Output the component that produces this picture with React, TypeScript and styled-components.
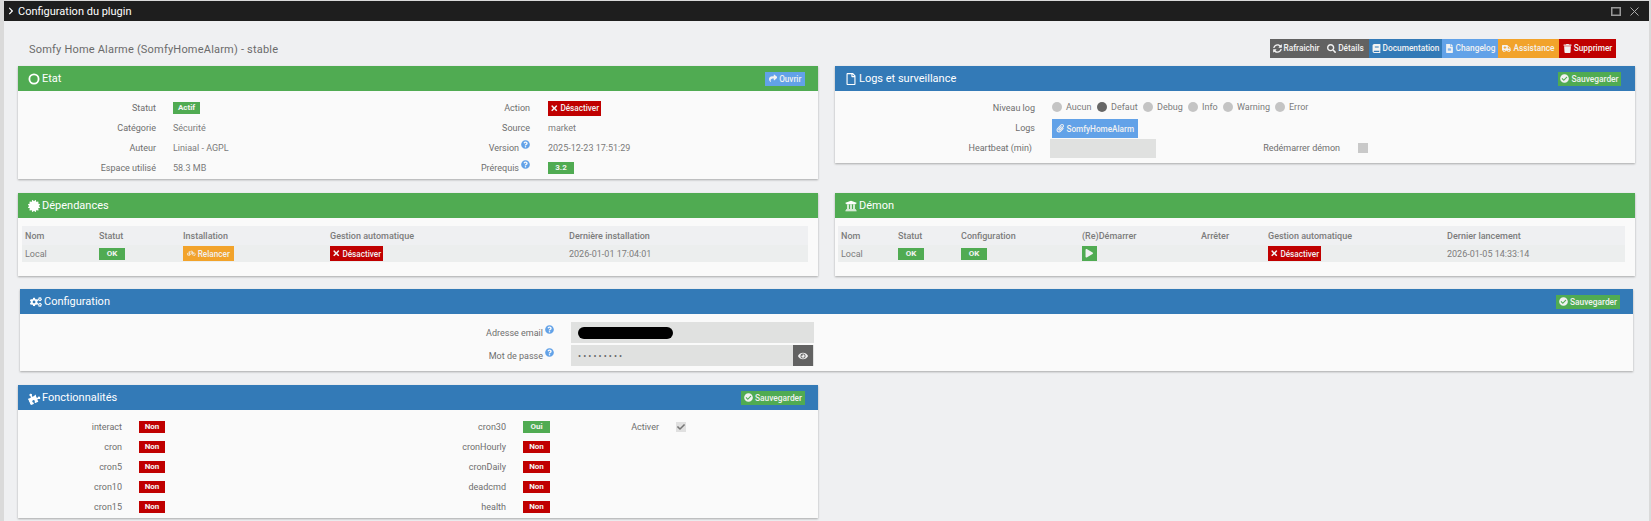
import React from "react";
import styled, { createGlobalStyle } from "styled-components";
import {
  FaAmbulance, FaBicycle, FaBook, FaCertificate, FaCheck, FaCheckCircle, FaChevronRight, FaCogs,
  FaEye, FaFileAlt, FaPaperclip, FaPlay, FaPuzzlePiece, FaQuestionCircle, FaRegFile,
  FaSearch, FaShare, FaSyncAlt, FaTimes, FaTrash, FaUniversity,
} from "react-icons/fa";

const GREEN = "#50ab52";
const BLUE = "#337ab7";
const SKY = "#62a2e8";
const ORANGE = "#f2a32b";
const RED = "#c00000";
const GREY = "#626262";

const Global = createGlobalStyle`
  html, body { margin: 0; padding: 0; background: #dadada; }
  body { font-family: Roboto, "Liberation Sans", sans-serif; overflow: hidden; }
`;

const Page = styled.div`
  padding: 1px 2px 0 4px;
  height: 520px;
`;
const Modal = styled.div`
  height: 520px;
  background: #eff0f2;
  display: flex;
  flex-direction: column;
  overflow: hidden;
`;
const TitleBar = styled.header`
  flex: none;
  height: 20px;
  background: #1e1e1e;
  color: #fff;
  display: flex;
  align-items: center;
  padding: 0 10px 0 3px;
  font-size: 11px;
  gap: 3px;
`;
const TitleText = styled.span`
  flex: 1;
`;
const WinButtons = styled.span`
  display: flex;
  align-items: center;
  gap: 9px;
`;
const Content = styled.div`
  padding: 0 14px;
`;
const PluginHead = styled.div`
  height: 45px;
  display: flex;
  align-items: center;
  justify-content: space-between;
  padding: 11px 19px 0 11px;
  box-sizing: border-box;
`;
const PluginName = styled.h1`
  margin: 0;
  font-size: 11px;
  font-weight: 400;
  letter-spacing: 0.2px;
  color: #6b6b6b;
`;
const ActionBar = styled.div`
  display: flex;
  height: 19px;
  margin-top: -2px;
`;
const ActionButton = styled.span<{ $bg: string; $w: number }>`
  width: ${(p) => p.$w}px;
  background: ${(p) => p.$bg};
  color: #f2f2f2;
  font-size: 8.3px;
  font-weight: 500;
  display: flex;
  align-items: center;
  justify-content: center;
  gap: 2px;
  white-space: nowrap;
  svg { font-size: 9px; flex: none; }
`;
const Columns = styled.div<{ $mb: number }>`
  display: grid;
  grid-template-columns: 800px 800px;
  column-gap: 17px;
  align-items: start;
  margin-bottom: ${(p) => p.$mb}px;
`;
const Panel = styled.section<{ $w?: number; $ml?: number; $mb?: number }>`
  width: ${(p) => (p.$w ? p.$w + "px" : "auto")};
  margin-left: ${(p) => p.$ml ?? 0}px;
  margin-bottom: ${(p) => p.$mb ?? 0}px;
  background: #fafafa;
  box-shadow: 0 1px 2px rgba(0, 0, 0, 0.3);
`;
const PanelHead = styled.div<{ $bg: string; $pr?: number }>`
  height: 25px;
  background: ${(p) => p.$bg};
  color: #fff;
  display: flex;
  align-items: center;
  justify-content: space-between;
  padding: 0 ${(p) => p.$pr ?? 13}px 0 10px;
  font-size: 11px;
  font-weight: 400;
`;
const HeadTitle = styled.span`
  display: flex;
  align-items: center;
  gap: 2px;
  svg { font-size: 12px; flex: none; }
`;
const PuzzleIcon = styled(FaPuzzlePiece)`
  transform: rotate(-25deg);
`;
const SmallButton = styled.span<{ $bg: string; $w?: number; $h?: number }>`
  display: inline-flex;
  align-items: center;
  justify-content: center;
  gap: 2px;
  box-sizing: border-box;
  width: ${(p) => (p.$w ? p.$w + "px" : "auto")};
  height: ${(p) => p.$h ?? 15}px;
  background: ${(p) => p.$bg};
  color: #f1f1f1;
  font-size: 8.2px;
  font-weight: 500;
  white-space: nowrap;
  svg { font-size: 8.5px; flex: none; }
`;
const SaveButton = styled(SmallButton)`
  font-size: 8.4px;
  font-weight: 500;
  svg { font-size: 9px; }
`;
const Badge = styled.span<{ $bg: string; $w: number }>`
  display: inline-flex;
  align-items: center;
  justify-content: center;
  width: ${(p) => p.$w}px;
  height: 12px;
  background: ${(p) => p.$bg};
  color: #f4f4f4;
  font-size: 8px;
  font-weight: 700;
`;
const InfoGrid = styled.div<{ $cols: string; $pt: number; $pb: number }>`
  display: grid;
  grid-template-columns: ${(p) => p.$cols};
  grid-auto-rows: 20px;
  align-items: center;
  padding: ${(p) => p.$pt}px 0 ${(p) => p.$pb}px;
`;
const Label = styled.span<{ $pr?: number }>`
  font-size: 9px;
  line-height: 12px;
  color: #6e6e6e;
  text-align: right;
  padding-right: ${(p) => p.$pr ?? 17}px;
  white-space: nowrap;
`;
const Help = styled(FaQuestionCircle)`
  color: ${SKY};
  font-size: 9px;
  vertical-align: middle;
  margin-left: 2px;
  position: relative;
  top: -4px;
`;
const Value = styled.span`
  font-size: 9px;
  color: #7a7a7a;
  white-space: nowrap;
  line-height: 12px;
  display: flex;
  align-items: center;
`;
const ValueWide = styled(Value)`
  grid-column: span 3;
`;
const LogBody = styled.div`
  padding: 6px 0 5px;
`;
const LogRow = styled.div<{ $h: number }>`
  display: flex;
  align-items: center;
  height: ${(p) => p.$h}px;
`;
const LogLabel = styled(Label)`
  width: 200px;
  box-sizing: border-box;
`;
const RadioGroup = styled.div`
  display: flex;
  align-items: center;
  margin: -2px 0 0 17px;
`;
const Radio = styled.span<{ $on?: boolean; $w: number }>`
  display: flex;
  align-items: center;
  width: ${(p) => p.$w}px;
  font-size: 9px;
  color: #7a7a7a;
  gap: 4px;
  &::before {
    content: "";
    width: 10px;
    height: 10px;
    border-radius: 50%;
    background: ${(p) => (p.$on ? "#666" : "#c4c4c4")};
    flex: none;
  }
`;
const LogButtonWrap = styled.div`
  margin-left: 17px;
`;
const GreyInput = styled.div<{ $w: number; $h: number }>`
  width: ${(p) => p.$w}px;
  height: ${(p) => p.$h}px;
  background: #e0e1e0;
  position: relative;
  display: flex;
  align-items: center;
  flex: none;
`;
const HeartInput = styled(GreyInput)`
  margin-left: 15px;
`;
const RestartLabel = styled(Label)`
  width: 184px;
  box-sizing: border-box;
  padding-right: 0;
`;
const CheckBox = styled.span`
  width: 10px;
  height: 10px;
  background: #c9c9c9;
  margin-left: 18px;
  flex: none;
`;
const TableWrap = styled.div<{ $pl: number; $w: number }>`
  padding: 8px 0 14px ${(p) => p.$pl}px;
  width: ${(p) => p.$w}px;
`;
const TableRow = styled.div<{ $cols: string; $bg: string; $h: number }>`
  display: grid;
  grid-template-columns: ${(p) => p.$cols};
  height: ${(p) => p.$h}px;
  background: ${(p) => p.$bg};
  align-items: center;
`;
const Th = styled.span`
  font-size: 9px;
  font-weight: 500;
  color: #7c7c7c;
  padding-left: 3px;
  white-space: nowrap;
`;
const Td = styled.span`
  font-size: 9px;
  color: #7c7c7c;
  padding-left: 3px;
  white-space: nowrap;
  display: flex;
  align-items: center;
`;
const ConfigBody = styled.div`
  padding: 8px 0 5px;
  display: grid;
  grid-template-columns: 551px 243px;
  grid-auto-rows: 21px;
  row-gap: 2px;
  align-items: center;
`;
const Redacted = styled.span`
  width: 95px;
  height: 12px;
  background: #000;
  border-radius: 6px;
  margin-left: 7px;
`;
const Dots = styled.span`
  font-size: 9px;
  color: #666;
  margin-left: 7px;
  letter-spacing: 2.1px;
`;
const EyeAddon = styled.span`
  position: absolute;
  right: 1px;
  top: 0;
  bottom: 0;
  width: 20px;
  background: ${GREY};
  color: #eee;
  display: flex;
  align-items: center;
  justify-content: center;
  font-size: 10px;
`;
const Tick = styled(FaCheck)`
  font-size: 8px;
  color: #777;
`;
const TickBox = styled.span`
  width: 10px;
  height: 10px;
  background: #e0e0e0;
  display: flex;
  align-items: center;
  justify-content: center;
`;

const Save = ({ w }: { w: number }) => (
  <SaveButton $bg={GREEN} $w={w} $h={14}><FaCheckCircle />Sauvegarder</SaveButton>
);
const Off = () => (
  <SmallButton $bg={RED} $w={53}><FaTimes />Désactiver</SmallButton>
);
const Ok = () => <Badge $bg={GREEN} $w={26}>OK</Badge>;

const ETAT_COLS = "155px 200px 175px 1fr";
const DEP_COLS = "74px 84px 147px 239px 1fr";
const DEM_COLS = "57px 63px 121px 119px 67px 179px 1fr";
const FEAT_COLS = "121px 200px 184px 70px 83px 1fr";
const FEATS: [string, string][] = [
  ["cron", "cronHourly"],
  ["cron5", "cronDaily"],
  ["cron10", "deadcmd"],
  ["cron15", "health"],
];

export default function App() {
  return (
    <Page>
      <Global />
      <Modal>
        <TitleBar>
          <FaChevronRight size={8} />
          <TitleText>Configuration du plugin</TitleText>
          <WinButtons>
            <svg width="10" height="9" viewBox="0 0 10 9"><rect x="0.75" y="0.75" width="8.5" height="7.5" fill="none" stroke="#999" strokeWidth="1.5" /></svg>
            <svg width="9" height="9" viewBox="0 0 9 9"><path d="M0.5 0.5L8.5 8.5M8.5 0.5L0.5 8.5" stroke="#aaa" fill="none" /></svg>
          </WinButtons>
        </TitleBar>
        <Content>
          <PluginHead>
            <PluginName>Somfy Home Alarme (SomfyHomeAlarm) - stable</PluginName>
            <ActionBar>
              <ActionButton $bg={GREY} $w={52}><FaSyncAlt />Rafraichir</ActionButton>
              <ActionButton $bg={GREY} $w={47}><FaSearch />Détails</ActionButton>
              <ActionButton $bg={BLUE} $w={73}><FaBook />Documentation</ActionButton>
              <ActionButton $bg={SKY} $w={56}><FaFileAlt />Changelog</ActionButton>
              <ActionButton $bg={ORANGE} $w={61}><FaAmbulance />Assistance</ActionButton>
              <ActionButton $bg={RED} $w={57}><FaTrash />Supprimer</ActionButton>
            </ActionBar>
          </PluginHead>

          <Columns $mb={14}>
            <Panel>
              <PanelHead $bg={GREEN}>
                <HeadTitle>
                  <svg width="12" height="12" viewBox="0 0 12 12"><circle cx="6" cy="6" r="4.6" fill="none" stroke="#fff" strokeWidth="1.8" /></svg>
                  Etat
                </HeadTitle>
                <SmallButton $bg={SKY} $w={40} $h={14}><FaShare />Ouvrir</SmallButton>
              </PanelHead>
              <InfoGrid $cols={ETAT_COLS} $pt={7} $pb={1}>
                <Label>Statut</Label>
                <Value><Badge $bg={GREEN} $w={27}>Actif</Badge></Value>
                <Label $pr={18}>Action</Label>
                <Value><Off /></Value>
                <Label>Catégorie</Label>
                <Value>Sécurité</Value>
                <Label $pr={18}>Source</Label>
                <Value>market</Value>
                <Label>Auteur</Label>
                <Value>Liniaal - AGPL</Value>
                <Label $pr={18}>Version<Help /></Label>
                <Value>2025-12-23 17:51:29</Value>
                <Label>Espace utilisé</Label>
                <Value>58.3 MB</Value>
                <Label $pr={18}>Prérequis<Help /></Label>
                <Value><Badge $bg={GREEN} $w={26}>3.2</Badge></Value>
              </InfoGrid>
            </Panel>
            <Panel>
              <PanelHead $bg={BLUE} $pr={14}>
                <HeadTitle><FaRegFile />Logs et surveillance</HeadTitle>
                <Save w={63} />
              </PanelHead>
              <LogBody>
                <LogRow $h={21}>
                  <LogLabel $pr={0}>Niveau log</LogLabel>
                  <RadioGroup>
                    <Radio $w={45}>Aucun</Radio>
                    <Radio $on $w={46}>Defaut</Radio>
                    <Radio $w={45}>Debug</Radio>
                    <Radio $w={35}>Info</Radio>
                    <Radio $w={52}>Warning</Radio>
                    <Radio $w={40}>Error</Radio>
                  </RadioGroup>
                </LogRow>
                <LogRow $h={20}>
                  <LogLabel $pr={0}>Logs</LogLabel>
                  <LogButtonWrap>
                    <SmallButton $bg={SKY} $w={86} $h={19}><FaPaperclip />SomfyHomeAlarm</SmallButton>
                  </LogButtonWrap>
                </LogRow>
                <LogRow $h={20}>
                  <LogLabel $pr={3}>Heartbeat (min)</LogLabel>
                  <HeartInput $w={106} $h={19} />
                  <RestartLabel>Redémarrer démon</RestartLabel>
                  <CheckBox />
                </LogRow>
              </LogBody>
            </Panel>
          </Columns>

          <Columns $mb={13}>
            <Panel>
              <PanelHead $bg={GREEN}>
                <HeadTitle><FaCertificate />Dépendances</HeadTitle>
              </PanelHead>
              <TableWrap $pl={4} $w={786}>
                <TableRow $cols={DEP_COLS} $bg="#eff0f2" $h={19}>
                  <Th>Nom</Th><Th>Statut</Th><Th>Installation</Th><Th>Gestion automatique</Th><Th>Dernière installation</Th>
                </TableRow>
                <TableRow $cols={DEP_COLS} $bg="#eceeee" $h={17}>
                  <Td>Local</Td>
                  <Td><Ok /></Td>
                  <Td><SmallButton $bg={ORANGE} $w={51}><FaBicycle />Relancer</SmallButton></Td>
                  <Td><Off /></Td>
                  <Td>2026-01-01 17:04:01</Td>
                </TableRow>
              </TableWrap>
            </Panel>
            <Panel>
              <PanelHead $bg={GREEN}>
                <HeadTitle><FaUniversity />Démon</HeadTitle>
              </PanelHead>
              <TableWrap $pl={3} $w={787}>
                <TableRow $cols={DEM_COLS} $bg="#eff0f2" $h={19}>
                  <Th>Nom</Th><Th>Statut</Th><Th>Configuration</Th><Th>(Re)Démarrer</Th><Th>Arrêter</Th><Th>Gestion automatique</Th><Th>Dernier lancement</Th>
                </TableRow>
                <TableRow $cols={DEM_COLS} $bg="#eceeee" $h={17}>
                  <Td>Local</Td>
                  <Td><Ok /></Td>
                  <Td><Ok /></Td>
                  <Td><SmallButton $bg={GREEN} $w={15}><FaPlay /></SmallButton></Td>
                  <Td />
                  <Td><Off /></Td>
                  <Td>2026-01-05 14:33:14</Td>
                </TableRow>
              </TableWrap>
            </Panel>
          </Columns>

          <Panel $w={1613} $ml={2} $mb={14}>
            <PanelHead $bg={BLUE}>
              <HeadTitle><FaCogs />Configuration</HeadTitle>
              <Save w={64} />
            </PanelHead>
            <ConfigBody>
              <Label>Adresse email<Help /></Label>
              <GreyInput $w={243} $h={21}><Redacted /></GreyInput>
              <Label>Mot de passe<Help /></Label>
              <GreyInput $w={243} $h={21}>
                <Dots>•••••••••</Dots>
                <EyeAddon><FaEye /></EyeAddon>
              </GreyInput>
            </ConfigBody>
          </Panel>

          <Panel $w={800}>
            <PanelHead $bg={BLUE}>
              <HeadTitle><PuzzleIcon />Fonctionnalités</HeadTitle>
              <Save w={64} />
            </PanelHead>
            <InfoGrid $cols={FEAT_COLS} $pt={7} $pb={1}>
              <Label>interact</Label>
              <Value><Badge $bg={RED} $w={26}>Non</Badge></Value>
              <Label>cron30</Label>
              <Value><Badge $bg={GREEN} $w={27}>Oui</Badge></Value>
              <Label>Activer</Label>
              <Value><TickBox><Tick /></TickBox></Value>
              {FEATS.map(([a, b]) => (
                <React.Fragment key={a}>
                  <Label>{a}</Label>
                  <Value><Badge $bg={RED} $w={26}>Non</Badge></Value>
                  <Label>{b}</Label>
                  <ValueWide><Badge $bg={RED} $w={27}>Non</Badge></ValueWide>
                </React.Fragment>
              ))}
            </InfoGrid>
          </Panel>
        </Content>
      </Modal>
    </Page>
  );
}
